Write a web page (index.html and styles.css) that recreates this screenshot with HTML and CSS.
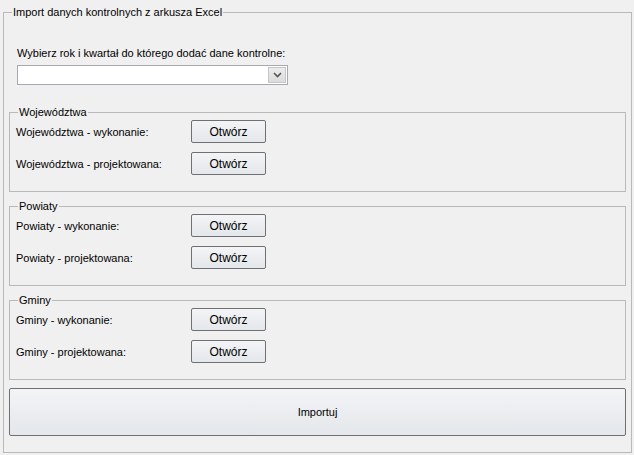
FILE: index.html
```html
<!DOCTYPE html>
<html lang="pl">
<head>
  <meta charset="UTF-8" />
  <meta name="viewport" content="width=device-width, initial-scale=1.0">
  <title>Import danych kontrolnych</title>
  <link rel="stylesheet" href="styles.css">
</head>
<body>

<fieldset class="group outer">
  <legend>Import danych kontrolnych z arkusza Excel</legend>

  <div class="pickLabel">Wybierz rok i kwartał do którego dodać dane kontrolne:</div>
  <div class="combo">
    <div class="comboText"></div>
    <div class="comboBtn">
      <svg width="9" height="6" viewBox="0 0 9 6"><path d="M1 1 L4.5 4.5 L8 1" fill="none" stroke="#555" stroke-width="1.6"/></svg>
    </div>
  </div>

  <fieldset class="group sub">
    <legend>Województwa</legend>
    <div class="row"><span>Województwa - wykonanie:</span><button>Otwórz</button></div>
    <div class="row"><span>Województwa - projektowana:</span><button>Otwórz</button></div>
  </fieldset>

  <fieldset class="group sub">
    <legend>Powiaty</legend>
    <div class="row"><span>Powiaty - wykonanie:</span><button>Otwórz</button></div>
    <div class="row"><span>Powiaty - projektowana:</span><button>Otwórz</button></div>
  </fieldset>

  <fieldset class="group sub">
    <legend>Gminy</legend>
    <div class="row"><span>Gminy - wykonanie:</span><button>Otwórz</button></div>
    <div class="row"><span>Gminy - projektowana:</span><button>Otwórz</button></div>
  </fieldset>

  <button class="importBtn">Importuj</button>
</fieldset>

</body>
</html>
```

FILE: styles.css
```css
* { box-sizing: border-box; }
html, body {
  margin: 0;
  height: 100%;
  overflow: hidden;
  background: #f0f0f0;
  font-family: "Liberation Sans", Arial, sans-serif;
  font-size: 11px;
  color: #000;
}

.group {
  border: 1px solid #b9b9b9;
  padding: 0;
  min-width: 0;
}
.group legend {
  margin-left: 8px;
  padding: 0 1px;
  line-height: 14px;
  height: 14px;
}

.outer {
  margin: 5px 2px 0 3px;
  padding-bottom: 16px;
}

.pickLabel {
  margin: 28px 0 0 13px;
  line-height: 13px;
  height: 13px;
}

.combo {
  display: flex;
  margin: 5px 0 0 13px;
  width: 271px;
  height: 20px;
  border: 1px solid #a6a9b0;
  background: #fff;
}
.comboText { flex: 1; }
.comboBtn {
  width: 18px;
  height: 16px;
  margin: 1px;
  display: flex;
  align-items: center;
  justify-content: center;
  background: linear-gradient(#ececec, #dcdcdc);
  border: 1px solid #c6c6c6;
}

.sub {
  margin: 20px 5px 0 5px;
  padding: 1px 0 16px 0;
  display: flex;
  flex-direction: column;
  gap: 9px;
}

.row {
  display: grid;
  grid-template-columns: 175px 75px;
  align-items: center;
  height: 23px;
  margin-left: 6px;
}

button {
  font-family: inherit;
  font-size: 12px;
  color: #000;
  border: 1px solid #707070;
  border-radius: 2px;
  background: linear-gradient(#f3f4f6, #e4e7eb);
  padding: 0;
}
.row button { height: 23px; width: 75px; }

.importBtn {
  display: block;
  margin: 8px 5px 0 5px;
  width: calc(100% - 10px);
  height: 48px;
  font-size: 11px;
}
.outer > .sub + .sub { margin-top: 7px; }
```
